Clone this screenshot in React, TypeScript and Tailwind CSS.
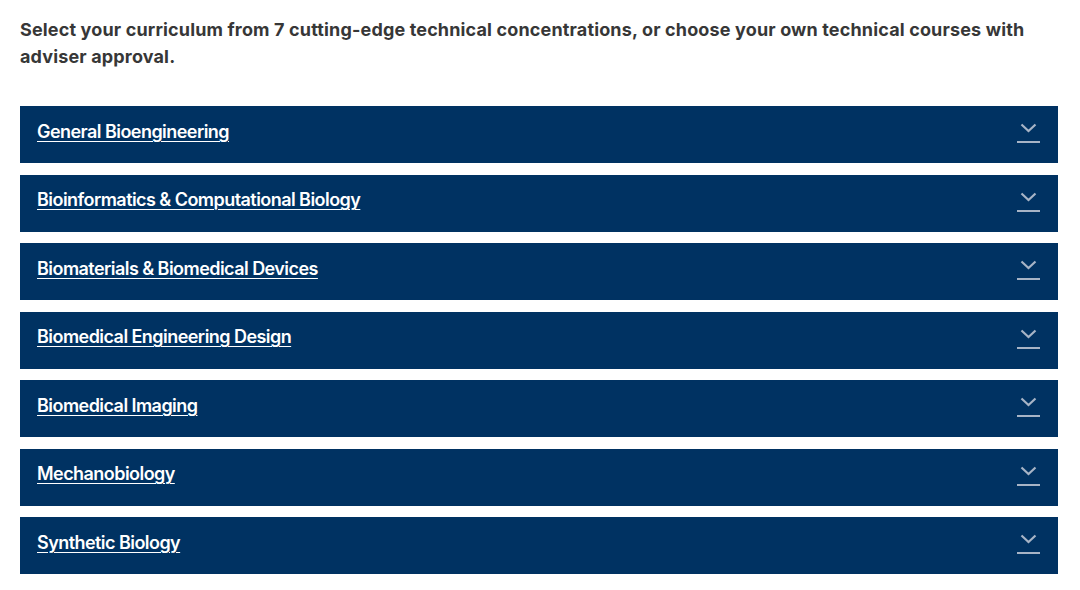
import React from "react";

const items = [
  "General Bioengineering",
  "Bioinformatics & Computational Biology",
  "Biomaterials & Biomedical Devices",
  "Biomedical Engineering Design",
  "Biomedical Imaging",
  "Mechanobiology",
  "Synthetic Biology",
];

function Chevron() {
  return (
    <svg width="24" height="22" viewBox="0 0 24 22" fill="none" className="block mb-[1px]">
      <path d="M4.5 1.5 L11.5 8 L18.5 1.5" stroke="#a7b4c6" strokeWidth="2.2" />
      <path d="M0 19 H23" stroke="#a7b4c6" strokeWidth="2" />
    </svg>
  );
}

export default function App() {
  return (
    <div
      className="w-[1080px] h-[590px] bg-white px-5 pt-[16px]"
      style={{ fontFamily: "Inter, 'Noto Sans', sans-serif" }}
    >
      <p className="text-[18px] font-bold leading-[27px] text-[#373737] tracking-[0.15px]">
        Select your curriculum from 7 cutting-edge technical concentrations, or choose your own technical courses with adviser approval.
      </p>
      <div className="mt-[36px] w-[1038px] flex flex-col gap-[11.5px]">
        {items.map((t) => (
          <div
            key={t}
            className="h-[57px] bg-[#003262] flex items-center justify-between pl-[17px] pr-[17px]"
          >
            <span className="mb-[7px] text-white text-[18px] font-semibold tracking-[-0.55px] underline underline-offset-[3px] decoration-[1px]">
              {t}
            </span>
            <Chevron />
          </div>
        ))}
      </div>
    </div>
  );
}
